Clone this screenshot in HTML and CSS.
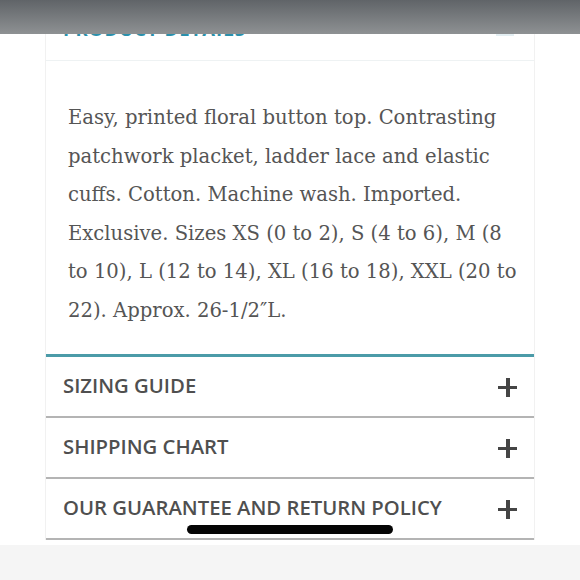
FILE: index.html
```html
<!DOCTYPE html>
<html lang="en">
<head>
<meta charset="utf-8">
<title>Product details</title>
<link rel="stylesheet" href="styles.css">
</head>
<body>
<div class="topbar"></div>
<main class="panel">
  <section class="details">
    <div class="details-head">
      <h2 class="details-title">PRODUCT DETAILS</h2>
      <span class="details-toggle"></span>
    </div>
    <p class="details-text">Easy, printed floral button top. Contrasting patchwork placket, ladder lace and elastic cuffs. Cotton. Machine wash. Imported. Exclusive. Sizes XS (0 to 2), S (4 to 6), M (8 to 10), L (12 to 14), XL (16 to 18), XXL (20 to 22). Approx. 26-1/2″L.</p>
  </section>
  <ul class="accordion">
    <li class="acc-row"><span class="acc-label">SIZING GUIDE</span><span class="plus"></span></li>
    <li class="acc-row"><span class="acc-label">SHIPPING CHART</span><span class="plus"></span></li>
    <li class="acc-row"><span class="acc-label">OUR GUARANTEE AND RETURN POLICY</span><span class="plus"></span></li>
  </ul>
</main>
<div class="footer-space"></div>
<div class="home-indicator"></div>
</body>
</html>
```
FILE: styles.css
```css
html, body {
  margin: 0;
  padding: 0;
  background: #ffffff;
}
body {
  width: 580px;
  height: 580px;
  overflow: hidden;
  position: relative;
  font-family: "Open Sans", "Liberation Sans", sans-serif;
}
.topbar {
  position: absolute;
  top: 0;
  left: 0;
  width: 580px;
  height: 34px;
  background: linear-gradient(#606468, #8e9193);
  z-index: 5;
}
.panel {
  margin: 0 45px;
  border-left: 1px solid #f1f1f1;
  border-right: 1px solid #f1f1f1;
}
.details-head {
  height: 60px;
  border-bottom: 1px solid #eef2f3;
  display: flex;
  align-items: flex-start;
  justify-content: space-between;
  padding: 0 20px 0 17px;
}
.details-title {
  margin: 19px 0 0;
  font-size: 18.5px;
  line-height: 20px;
  font-weight: 700;
  color: #2a90ab;
  letter-spacing: 1px;
}
.details-toggle {
  margin-top: 34px;
  width: 18px;
  height: 2px;
  background: #e3eef2;
}
.details-text {
  margin: 0;
  padding: 38px 12px 23px 22px;
  font-family: "DejaVu Serif", serif;
  font-size: 19.6px;
  line-height: 38.6px;
  color: #555555;
}
.accordion {
  list-style: none;
  margin: 0;
  padding: 0;
  border-top: 3px solid #4b9ba8;
}
.acc-row {
  height: 59px;
  border-bottom: 2px solid #b4b4b4;
  display: flex;
  align-items: center;
  justify-content: space-between;
  padding: 0 17px 0 17px;
}
.acc-label {
  font-size: 20.3px;
  font-weight: 600;
  color: #4f4f4f;
  margin-top: -3px;
}
.plus {
  width: 19px;
  height: 19px;
  position: relative;
  margin-top: 2px;
}
.plus::before, .plus::after {
  content: "";
  position: absolute;
  background: #454545;
}
.plus::before {
  left: 0;
  top: 8px;
  width: 19px;
  height: 3.5px;
}
.plus::after {
  left: 8px;
  top: 0;
  width: 3.5px;
  height: 19px;
}
.footer-space {
  height: 60px;
  margin-top: 5px;
  background: #f5f5f5;
}
.home-indicator {
  position: absolute;
  left: 187px;
  top: 525px;
  width: 206px;
  height: 9px;
  border-radius: 5px;
  background: #050505;
}
```
